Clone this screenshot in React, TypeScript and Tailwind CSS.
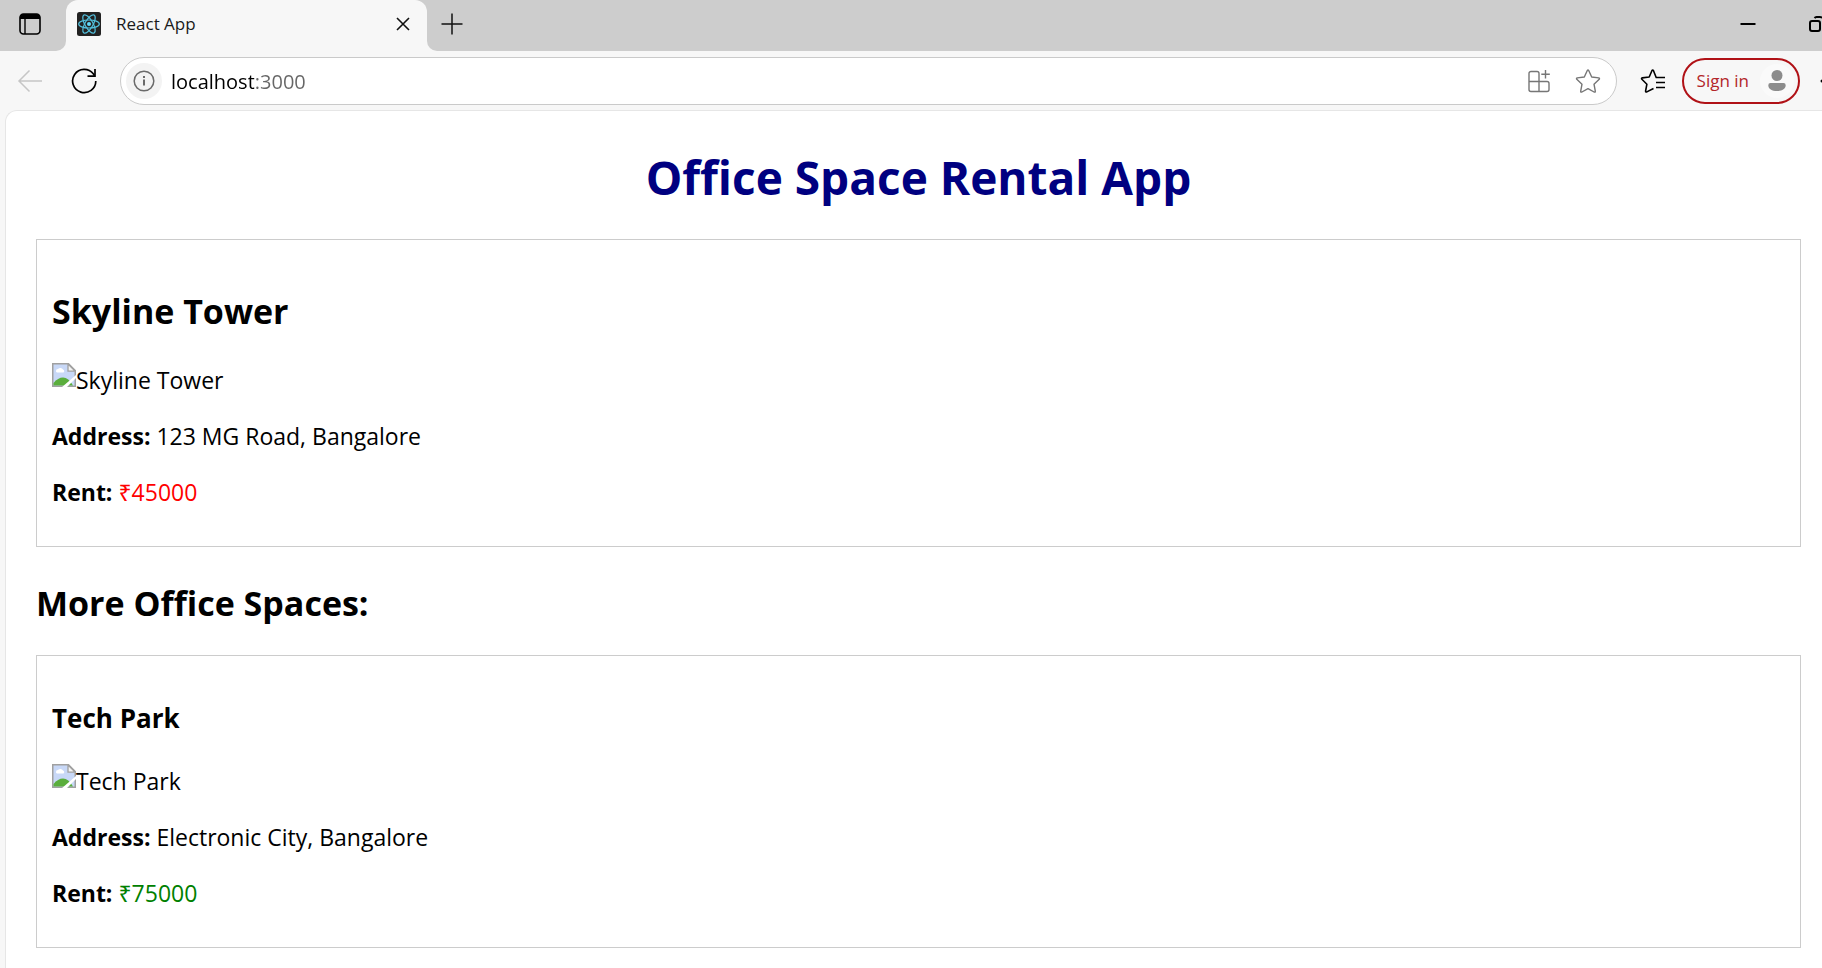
import React from "react";

type Office = {
  name: string;
  address: string;
  rent: number;
};

const featured: Office = { name: "Skyline Tower", address: "123 MG Road, Bangalore", rent: 45000 };
const others: Office[] = [{ name: "Tech Park", address: "Electronic City, Bangalore", rent: 75000 }];

function WorkspacesIcon() {
  return (
    <svg width="22" height="22" viewBox="0 0 22 22" fill="none" aria-hidden="true">
      <rect x="1" y="1" width="20" height="20" rx="3.5" stroke="#000" strokeWidth="1.6" />
      <path d="M1 6V4.5A3.5 3.5 0 0 1 4.500 1h13A3.500 3.500 0 0 1 21 4.500V6Z" fill="#000" />
      <path d="M6 6v15" stroke="#000" strokeWidth="1.400" />
    </svg>
  );
}

function ReactLogo() {
  return (
    <svg width="24" height="24" viewBox="0 0 24 24" fill="none" className="shrink-0" aria-hidden="true">
      <rect width="24" height="24" rx="2.500" fill="#222222" />
      <g stroke="#53c1de" strokeWidth="1.200">
        <ellipse cx="12" cy="12" rx="10.300" ry="4" />
        <ellipse cx="12" cy="12" rx="10.300" ry="4" transform="rotate(60 12 12)" />
        <ellipse cx="12" cy="12" rx="10.300" ry="4" transform="rotate(120 12 12)" />
      </g>
      <circle cx="12" cy="12" r="2" fill="#61dafb" />
    </svg>
  );
}

function CloseIcon() {
  return (
    <svg width="14" height="14" viewBox="0 0 14 14" fill="none" stroke="#111" strokeWidth="1.600" aria-hidden="true">
      <path d="M1 1l12 12M13 1L1 13" />
    </svg>
  );
}

function PlusIcon() {
  return (
    <svg width="22" height="22" viewBox="0 0 22 22" fill="none" stroke="#111" strokeWidth="1.500" aria-hidden="true">
      <path d="M11 .5v21M.5 11h21" />
    </svg>
  );
}

function MinimizeIcon() {
  return (
    <svg width="16" height="16" viewBox="0 0 16 16" fill="none" stroke="#000" strokeWidth="2" aria-hidden="true">
      <path d="M.5 8h15" />
    </svg>
  );
}

function RestoreIcon() {
  return (
    <svg width="16" height="16" viewBox="0 0 16 16" fill="none" stroke="#000" strokeWidth="2" aria-hidden="true">
      <rect x="1" y="5" width="10" height="10" rx="2" />
      <path d="M5.500 2A3 3 0 0 1 7.500 1H11a4 4 0 0 1 4 4v4" />
    </svg>
  );
}

function BackIcon() {
  return (
    <svg width="26" height="24" viewBox="0 0 26 24" fill="none" stroke="#c6c6c6" strokeWidth="1.500" aria-hidden="true">
      <path d="M12.500 1.500L2 12l10.500 10.500M2 12h23" />
    </svg>
  );
}

function ReloadIcon() {
  return (
    <svg width="26" height="26" viewBox="0 0 26 26" fill="none" stroke="#000" strokeWidth="1.700" aria-hidden="true">
      <path d="M24.800 13A11.600 11.600 0 1 1 22.300 5.800L23.500 7.700" />
      <path d="M24 1v7.200h-7.500" />
    </svg>
  );
}

function InfoIcon() {
  return (
    <svg width="22" height="22" viewBox="0 0 22 22" fill="none" stroke="#6a6a6a" strokeWidth="1.500" aria-hidden="true">
      <circle cx="11" cy="11" r="9.800" />
      <path d="M11 9.500V15.500" strokeWidth="2" />
      <path d="M11 6v2" strokeWidth="2" />
    </svg>
  );
}

function AppsIcon() {
  return (
    <svg width="24" height="24" viewBox="0 0 24 24" fill="none" stroke="#767676" strokeWidth="1.400" aria-hidden="true">
      <path d="M12 12.500V4.500A2 2 0 0 0 10 2.500H4A2 2 0 0 0 2 4.500V20.500A2 2 0 0 0 4 22.500H20A2 2 0 0 0 22 20.500V14.500A2 2 0 0 0 20 12.500H2M12 12.500V22.500" />
      <path d="M18.500 1v8.500M14.300 5.200h8.500" />
    </svg>
  );
}

function StarIcon() {
  return (
    <svg width="26" height="26" viewBox="0 0 26 26" fill="none" stroke="#767676" strokeWidth="1.400" strokeLinejoin="round" aria-hidden="true">
      <path d="M12.300 2.500q.7-1.200 1.400 0L16.700 9l7 .9q1.300.3.500 1.400L19 16.200l1.300 7q.1 1.300-1.200.8L13 20.600 6.900 24q-1.300.5-1.200-.8L7 16.200 1.800 11.300Q1 10.200 2.300 9.900L9.300 9Z" />
    </svg>
  );
}

function FavoritesIcon() {
  return (
    <svg width="26" height="26" viewBox="0 0 26 26" fill="none" stroke="#000" strokeWidth="1.600" strokeLinejoin="round" aria-hidden="true">
      <path d="M25 9.500H16.200L13.500 2.700Q12.700 1.200 11.900 2.700L9.200 9 2.300 9.900Q1 10.200 1.900 11.300L6.900 16.200 5.600 23Q5.500 24.400 6.800 23.900L13.500 20.500" />
      <path d="M16 14.500h9M16 19.500h9" />
    </svg>
  );
}

function PersonIcon() {
  return (
    <svg width="34" height="34" viewBox="0 0 34 34" aria-hidden="true">
      <circle cx="17" cy="17" r="17" fill="#fafafa" />
      <circle cx="17" cy="11.500" r="5.500" fill="#8c8c8c" />
      <path d="M10.500 19h13a2.200 2.200 0 0 1 2.200 2.200C25.700 25 22 27 17 27s-8.700-2-8.700-5.800A2.200 2.200 0 0 1 10.500 19Z" fill="#8c8c8c" />
    </svg>
  );
}

function MissingImage({ alt }: { alt: string }) {
  return (
    <div role="img" aria-label={alt} className="flex">
      <svg width="24" height="24" viewBox="0 0 24 24" className="shrink-0" aria-hidden="true">
        <path d="M.75.75H16.500L23.250 7.500V23.250H.75Z" fill="#c8d8f7" stroke="#a0a0a0" strokeWidth="1.500" />
        <path d="M4 8.200a2 2 0 0 1 2-2.200 3 3 0 0 1 5 .5 1.600 1.600 0 0 1 .3 3H5Q4 9.300 4 8.200Z" fill="#fff" />
        <path d="M1.500 22.500V20Q6 14.500 11 14.500q5.500 0 10 8Z" fill="#5aae3c" />
        <path d="M16 1v7.200h7.300Z" fill="#f4f4f4" stroke="#a0a0a0" strokeWidth="1.300" />
        <path d="M9.500 24.500L24.500 11.500V14.500L14.500 24.500Z" fill="#fff" />
      </svg>
      <span>{alt}</span>
    </div>
  );
}

function OfficeDetails({ office }: { office: Office }) {
  return (
    <>
      <MissingImage alt={office.name} />
      <p className="my-[22px]">
        <b>Address:</b> {office.address}
      </p>
      <p className="my-[22px]">
        <b>Rent:</b>{" "}
        <span className={office.rent < 60000 ? "text-[#ff0000]" : "text-[#008000]"}>₹{office.rent}</span>
      </p>
    </>
  );
}

function TabStrip() {
  return (
    <div className="flex h-[51px] overflow-hidden">
      <div className="flex w-[66px] shrink-0 items-center rounded-br-[10px] bg-[#cdcdcd] pb-[3px] pl-[19px]">
        <button type="button" aria-label="Tab actions">
          <WorkspacesIcon />
        </button>
      </div>
      <div className="w-[361px] shrink-0 bg-[#cdcdcd]">
        <div className="flex h-full items-center rounded-t-[12px] bg-[#f7f7f7] pr-[17px] pb-[3px] pl-[11px]">
          <ReactLogo />
          <span className="ml-[15px] flex-1 text-[17px] leading-6 text-[#1b1b1b]">React App</span>
          <button type="button" aria-label="Close tab">
            <CloseIcon />
          </button>
        </div>
      </div>
      <div className="flex min-w-0 flex-1 items-center rounded-bl-[10px] bg-[#cdcdcd] pb-[3px] pl-[14px]">
        <button type="button" aria-label="New tab">
          <PlusIcon />
        </button>
        <div className="-mr-[3px] ml-auto flex gap-[53px]">
          <button type="button" aria-label="Minimize">
            <MinimizeIcon />
          </button>
          <button type="button" aria-label="Restore">
            <RestoreIcon />
          </button>
        </div>
      </div>
    </div>
  );
}

function Toolbar() {
  return (
    <div className="flex h-[59px] items-center overflow-hidden pl-[17px]">
      <button type="button" aria-label="Back" disabled>
        <BackIcon />
      </button>
      <button type="button" aria-label="Reload" className="ml-7">
        <ReloadIcon />
      </button>
      <div className="ml-[23px] flex h-12 min-w-0 flex-1 items-center rounded-full border border-[#cacaca] bg-white pr-[15px] pl-[5px]">
        <button
          type="button"
          aria-label="Site information"
          className="flex size-9 shrink-0 items-center justify-center rounded-full bg-[#f3f3f3]"
        >
          <InfoIcon />
        </button>
        <input
          type="text"
          aria-label="Address"
          defaultValue="localhost:3000"
          className="ml-[9px] min-w-0 flex-1 bg-[linear-gradient(to_right,#000_83px,#666_83px)] bg-clip-text pt-[2px] text-[20px] leading-7 text-transparent outline-none"
        />
        <button type="button" aria-label="Apps">
          <AppsIcon />
        </button>
        <button type="button" aria-label="Add to favorites" className="ml-6">
          <StarIcon />
        </button>
      </div>
      <button type="button" aria-label="Favorites" className="ml-[23px]">
        <FavoritesIcon />
      </button>
      <button
        type="button"
        className="ml-4 flex h-[46px] items-center gap-[11px] rounded-full border-2 border-[#b01116] pr-1 pl-[13px] text-[17px] leading-6 text-[#b3262a]"
      >
        Sign in
        <PersonIcon />
      </button>
      <button type="button" aria-label="More" className="-mr-5 ml-5">
        <svg width="22" height="4" viewBox="0 0 22 4" fill="#000" aria-hidden="true">
          <circle cx="2" cy="2" r="1.500" />
          <circle cx="11" cy="2" r="1.500" />
          <circle cx="20" cy="2" r="1.500" />
        </svg>
      </button>
    </div>
  );
}

export default function App() {
  return (
    <div className="flex min-h-screen flex-col overflow-hidden bg-[#f7f7f7] font-['Open_Sans','Noto_Sans',sans-serif]">
      <header>
        <TabStrip />
        <Toolbar />
      </header>
      <main className="ml-[5px] flex-1 rounded-tl-[12px] border-t border-l border-[#e6e6e6] bg-white pt-[34px] pr-[21px] pl-[30px] text-[23px] leading-[34px] text-black">
        <h1 className="mb-[30px] text-center text-[46px] leading-[64px] font-bold text-[#000080]">
          Office Space Rental App
        </h1>
        <section className="border border-[#cccccc] px-[15px] pt-[45px] pb-[15px]">
          <h2 className="mb-[26px] text-[34px] leading-[52px] font-bold">{featured.name}</h2>
          <OfficeDetails office={featured} />
        </section>
        <h2 className="mt-[30px] mb-[26px] text-[34px] leading-[52px] font-bold">More Office Spaces:</h2>
        {others.map((office) => (
          <section key={office.name} className="border border-[#cccccc] px-[15px] pt-[43px] pb-[15px]">
            <h3 className="mb-[27px] text-[26px] leading-[38px] font-bold">{office.name}</h3>
            <OfficeDetails office={office} />
          </section>
        ))}
      </main>
    </div>
  );
}
